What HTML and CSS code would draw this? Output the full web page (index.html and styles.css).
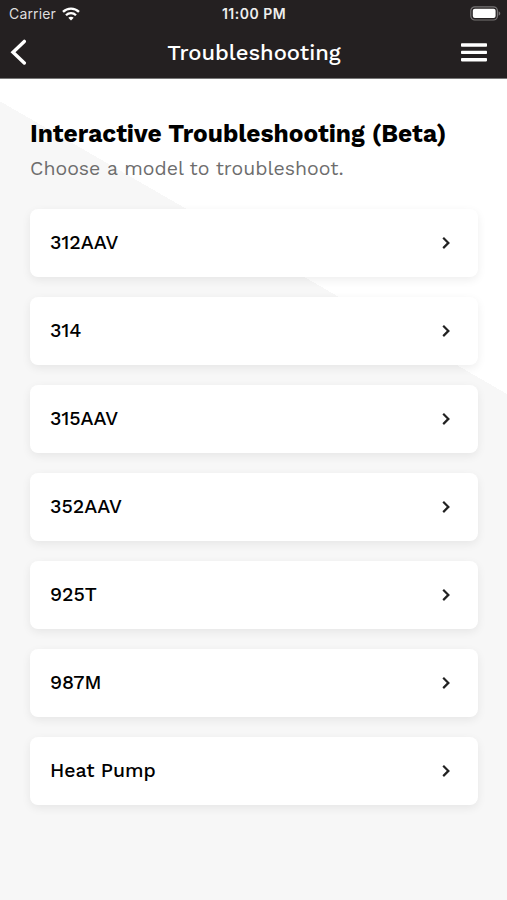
FILE: index.html
```html
<!DOCTYPE html>
<html lang="en">
<head>
<meta charset="utf-8">
<meta name="viewport" content="width=device-width, initial-scale=1">
<title>Troubleshooting</title>
<link rel="stylesheet" href="styles.css">
</head>
<body>

<header class="header">
  <div class="status">
    <div class="status-left">
      <span class="carrier">Carrier</span>
      <svg class="wifi" width="18" height="14" viewBox="0 0 18 14" fill="none" stroke="#fff" stroke-width="2.3">
        <path d="M1 4.9C5.4.4 12.6.4 17 4.9"/>
        <path d="M4 8.2c2.8-2.8 7.2-2.8 10 0"/>
        <path d="M9 13.4 6.3 10.7c1.5-1.4 3.9-1.4 5.4 0z" fill="#fff" stroke="none"/>
      </svg>
    </div>
    <span class="time">11:00 PM</span>
    <svg class="battery" width="31" height="15" viewBox="0 0 31 15">
      <rect x=".8" y=".8" width="26.6" height="13.2" rx="4" fill="none" stroke="#777475" stroke-width="1.2"/>
      <rect x="2.8" y="2.8" width="22.8" height="9.2" rx="2" fill="#fff"/>
      <path d="M28.6 5.2c2.2.8 2.2 3.7 0 4.5z" fill="#777475"/>
    </svg>
  </div>
  <div class="navbar">
    <svg class="back" width="18" height="28" viewBox="0 0 18 28" fill="none" stroke="#fff" stroke-width="3.4" stroke-linecap="round">
      <path d="M15.3 2.4 4 13.2 15.3 24"/>
    </svg>
    <h1 class="navbar-title">Troubleshooting</h1>
    <svg class="menu" width="26" height="19" viewBox="0 0 26 19" fill="#fff">
      <rect y=".3" width="26" height="3.4" rx=".8"/>
      <rect y="7.8" width="26" height="3.2" rx=".8"/>
      <rect y="15" width="26" height="3.4" rx=".8"/>
    </svg>
  </div>
</header>

<main class="content">
  <h2 class="title">Interactive Troubleshooting (Beta)</h2>
  <p class="subtitle">Choose a model to troubleshoot.</p>

  <ul class="models">
    <li class="model"><span class="name">312AAV</span><svg class="chevron" viewBox="0 0 10 14"><path d="m2.2 1.7 5.2 5.2-5.2 5.2"/></svg></li>
    <li class="model"><span class="name">314</span><svg class="chevron" viewBox="0 0 10 14"><path d="m2.2 1.7 5.2 5.2-5.2 5.2"/></svg></li>
    <li class="model"><span class="name">315AAV</span><svg class="chevron" viewBox="0 0 10 14"><path d="m2.2 1.7 5.2 5.2-5.2 5.2"/></svg></li>
    <li class="model"><span class="name">352AAV</span><svg class="chevron" viewBox="0 0 10 14"><path d="m2.2 1.7 5.2 5.2-5.2 5.2"/></svg></li>
    <li class="model"><span class="name">925T</span><svg class="chevron" viewBox="0 0 10 14"><path d="m2.2 1.7 5.2 5.2-5.2 5.2"/></svg></li>
    <li class="model"><span class="name">987M</span><svg class="chevron" viewBox="0 0 10 14"><path d="m2.2 1.7 5.2 5.2-5.2 5.2"/></svg></li>
    <li class="model"><span class="name">Heat Pump</span><svg class="chevron" viewBox="0 0 10 14"><path d="m2.2 1.7 5.2 5.2-5.2 5.2"/></svg></li>
  </ul>
</main>

</body>
</html>
```

FILE: styles.css
```css
* {
  box-sizing: border-box;
}

body {
  margin: 0;
  min-height: 900px;
  display: flex;
  flex-direction: column;
  font-family: "Work Sans", Inter, sans-serif;
  background: #fff;
  color: #000;
}

svg {
  display: block;
  flex: none;
}

/* Header */

.header {
  height: 79px;
  background: #242021;
  border-bottom: 1px solid #777;
  color: #fff;
}

.status {
  height: 27px;
  display: grid;
  grid-template-columns: 1fr auto 1fr;
  align-items: center;
  padding: 0 6px 0 9px;
  font-family: Inter, sans-serif;
  font-size: 14px;
}

.status-left {
  display: flex;
  align-items: center;
  gap: 6px;
}

.carrier {
  width: 47px;
  color: #dedede;
  letter-spacing: 0.15px;
}

.time {
  margin-right: 2px;
  font-weight: 600;
  letter-spacing: 0.5px;
  color: #eee;
}

.battery {
  justify-self: end;
}

.navbar {
  height: 51px;
  display: grid;
  grid-template-columns: 1fr auto 1fr;
  align-items: center;
  padding: 0 20px 0 9px;
}

.navbar-title {
  margin: 0;
  padding: 0 0 1px 12px;
  font-size: 22px;
  font-weight: 500;
}

.menu {
  justify-self: end;
}

/* Page */

.content {
  flex: 1;
  padding: 41px 29px 0 30px;
  /* white slope behind the heading */
  background: conic-gradient(from 300deg at 507px 315px, #fff 60deg, #f7f7f7 0);
}

.title {
  margin: 0;
  font-size: 24.5px;
  line-height: 28px;
  font-weight: 700;
  white-space: nowrap;
}

.subtitle {
  margin: 9px 0 0;
  font-size: 19.5px;
  line-height: 24px;
  color: #6d6d6d;
  white-space: nowrap;
}

.models {
  list-style: none;
  margin: 28px 0 0;
  padding: 0;
  display: flex;
  flex-direction: column;
  gap: 20px;
}

.model {
  height: 68px;
  display: flex;
  align-items: center;
  justify-content: space-between;
  padding: 0 27px 0 20px;
  border-radius: 8px;
  background: #fff;
  box-shadow: 0 3px 10px rgba(0, 0, 0, 0.07);
}

.name {
  padding-bottom: 1px;
  font-size: 19.5px;
  font-weight: 500;
}

.chevron {
  width: 10px;
  height: 14px;
  fill: none;
  stroke: #222;
  stroke-width: 2.2;
}
```
